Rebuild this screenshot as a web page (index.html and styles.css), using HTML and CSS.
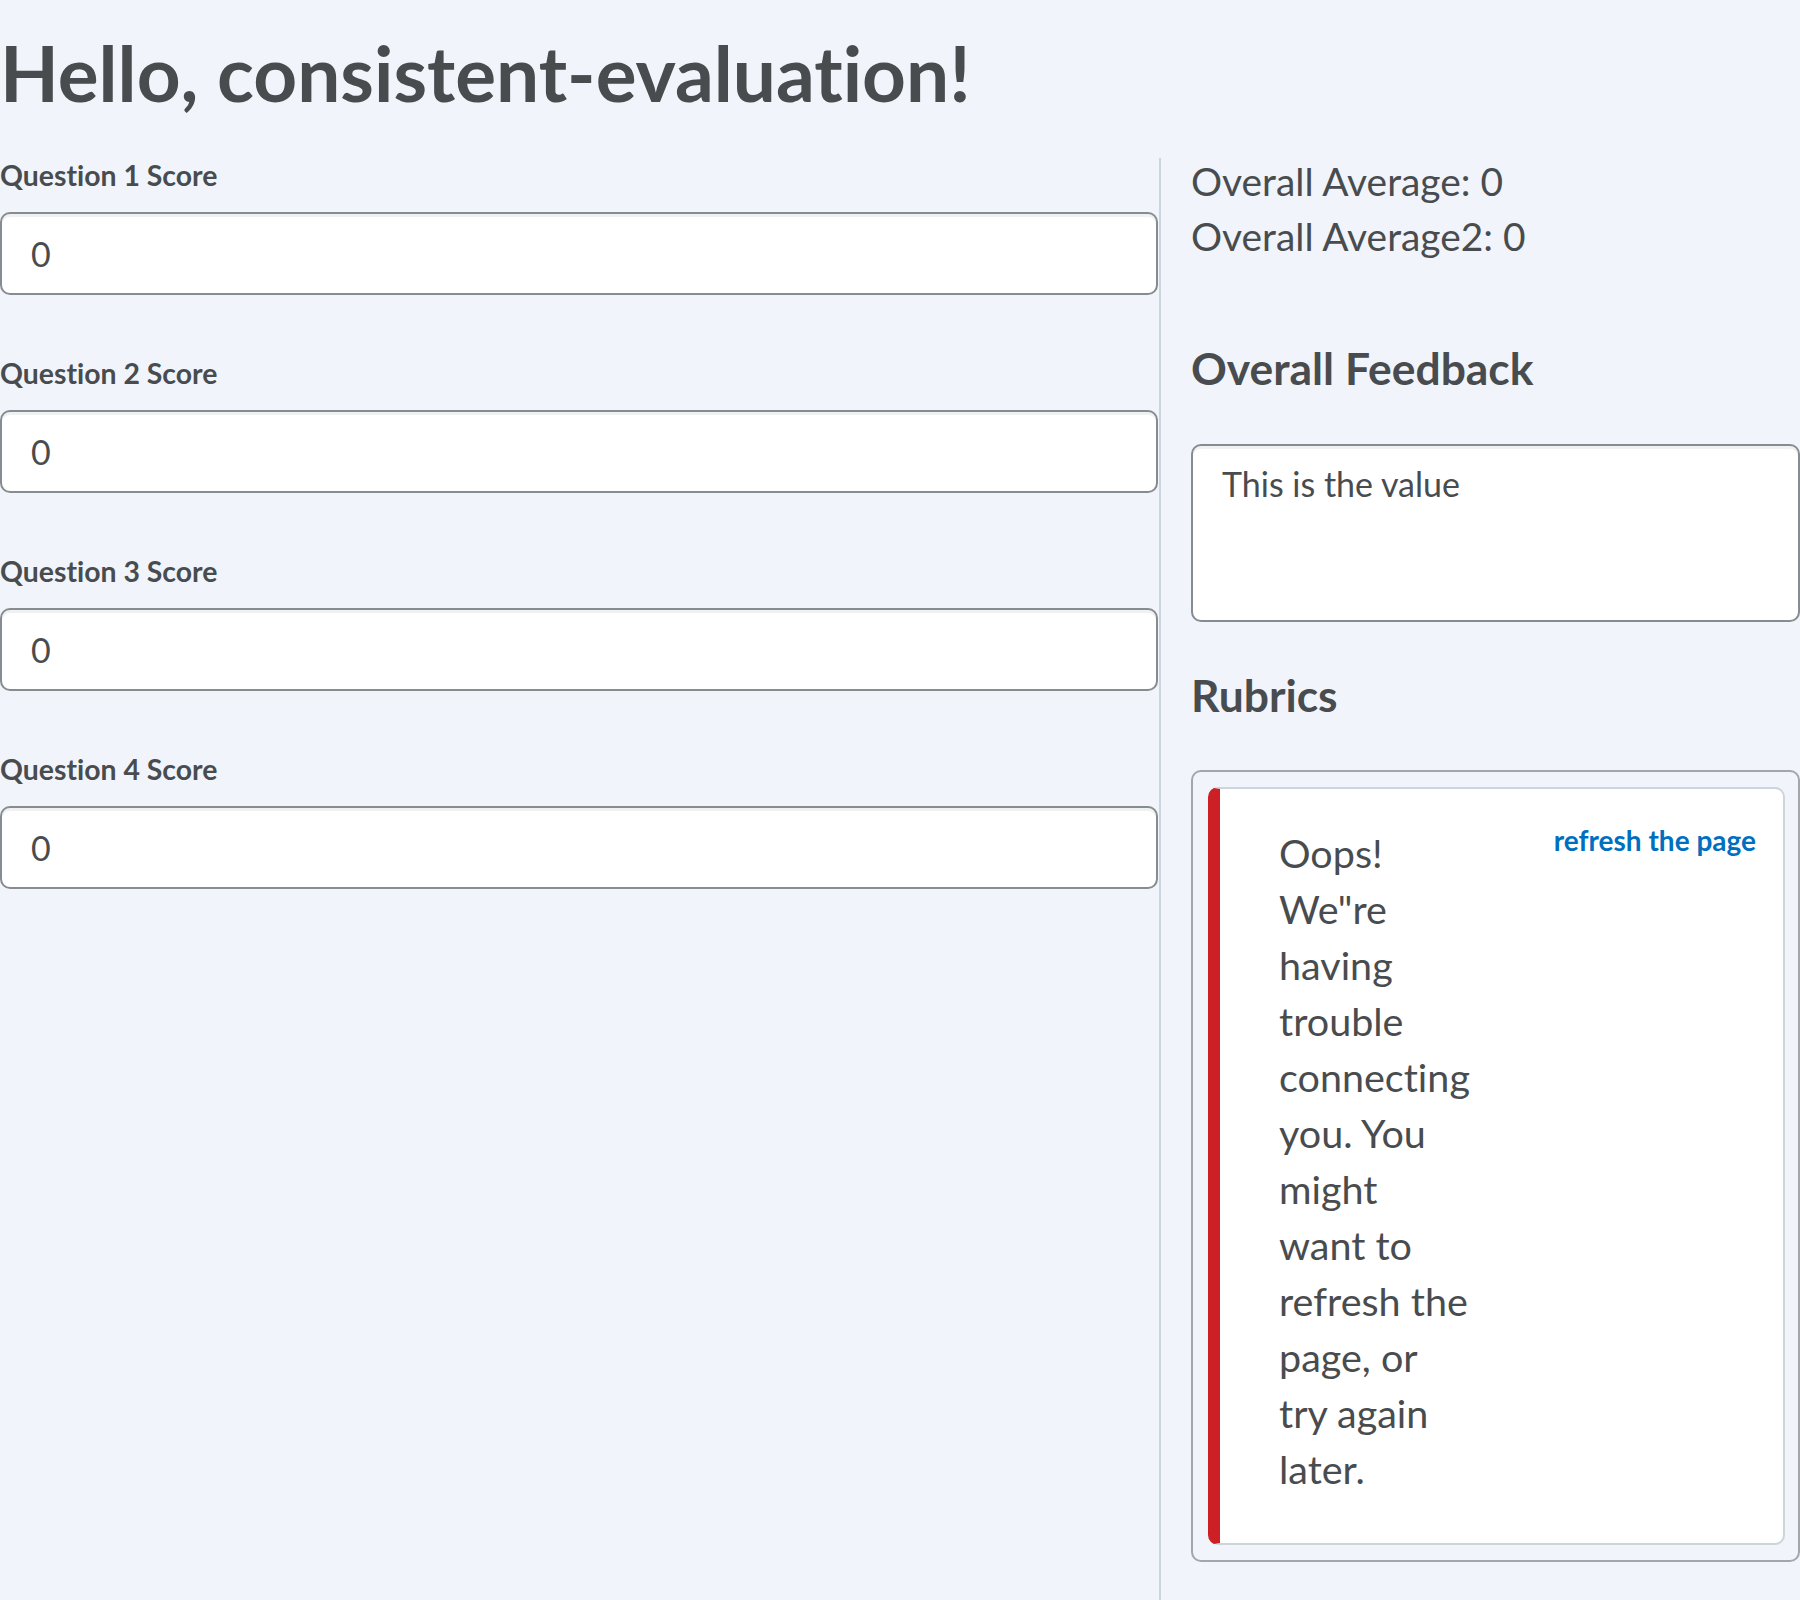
FILE: index.html
```html
<!DOCTYPE html>
<html lang="en">
<head>
<meta charset="utf-8">
<title>consistent-evaluation</title>
<link rel="stylesheet" href="styles.css">
</head>
<body>
<h1 class="title">Hello, consistent-evaluation!</h1>
<div class="layout">
  <div class="main">
    <div class="field">
      <label class="label" for="q1">Question 1 Score</label>
      <input class="input" id="q1" type="text" value="0">
    </div>
    <div class="field">
      <label class="label" for="q2">Question 2 Score</label>
      <input class="input" id="q2" type="text" value="0">
    </div>
    <div class="field">
      <label class="label" for="q3">Question 3 Score</label>
      <input class="input" id="q3" type="text" value="0">
    </div>
    <div class="field">
      <label class="label" for="q4">Question 4 Score</label>
      <input class="input" id="q4" type="text" value="0">
    </div>
  </div>
  <aside class="side">
    <div class="averages">
      <div>Overall Average: 0</div>
      <div>Overall Average2: 0</div>
    </div>
    <h2 class="section-title feedback-title">Overall Feedback</h2>
    <textarea class="textarea">This is the value</textarea>
    <h2 class="section-title rubrics-title">Rubrics</h2>
    <div class="card">
      <div class="alert">
        <div class="alert-text">Oops! We"re having trouble connecting you. You might want to refresh the page, or try again later.</div>
        <a class="alert-action" href="#">refresh the page</a>
      </div>
    </div>
  </aside>
</div>
</body>
</html>
```
FILE: styles.css
```css
html, body {
  margin: 0;
  padding: 0;
}

body {
  background: #f1f5fb;
  color: #494c4e;
  font-family: Lato, "Open Sans", sans-serif;
  font-variant-ligatures: no-common-ligatures;
}

.title {
  margin: 26px 0 40px;
  font-size: 76.5px;
  line-height: 92px;
  font-weight: 700;
}

.layout {
  display: flex;
  align-items: stretch;
  min-height: calc(100vh - 158px);
}

.main {
  width: 1159px;
  flex: none;
}

.field {
  margin-bottom: 61px;
}

.label {
  display: block;
  font-size: 28.4px;
  line-height: 35px;
  font-weight: 700;
  margin-bottom: 19px;
}

.input {
  display: block;
  box-sizing: border-box;
  width: 1158px;
  height: 83px;
  margin: 0;
  padding: 0 29px;
  border: 2px solid #868c8f;
  border-radius: 10px;
  background: #fff;
  box-shadow: inset 0 3px 0 0 rgba(177, 185, 190, 0.2);
  color: #494c4e;
  font-family: Lato, "Open Sans", sans-serif;
  font-size: 34px;
  outline: none;
}

.side {
  flex: 1;
  border-left: 2px solid #cdd5dc;
  padding-left: 30px;
  min-width: 0;
}

.averages {
  margin-top: -4px;
  font-size: 38.9px;
  line-height: 55px;
}

.section-title {
  margin: 0;
  font-size: 44.4px;
  line-height: 50px;
  font-weight: 700;
}

.feedback-title {
  margin-top: 79px;
  margin-bottom: 51px;
}

.textarea {
  display: block;
  box-sizing: border-box;
  width: 100%;
  height: 178px;
  margin: 0 0 48px;
  padding: 14px 29px;
  border: 2px solid #868c8f;
  border-radius: 10px;
  background: #fff;
  box-shadow: inset 0 3px 0 0 rgba(177, 185, 190, 0.2);
  color: #494c4e;
  font-family: Lato, "Open Sans", sans-serif;
  font-size: 34px;
  line-height: 1.4;
  resize: none;
  outline: none;
}

.rubrics-title {
  margin-bottom: 50px;
}

.card {
  border: 2px solid #a1a7ab;
  border-radius: 10px;
  padding: 15px 13px 15px 15px;
}

.alert {
  display: flex;
  align-items: flex-start;
  background: #fff;
  border: 2px solid #cdd5dc;
  border-left: 12px solid #cd2026;
  border-radius: 10px;
  padding: 36px 27px 46px 59px;
}

.alert-text {
  width: 191px;
  font-size: 39.5px;
  line-height: 56px;
}

.alert-action {
  margin-left: auto;
  color: #006fbf;
  font-size: 28px;
  line-height: 30px;
  font-weight: 700;
  text-decoration: none;
  white-space: nowrap;
}
```
